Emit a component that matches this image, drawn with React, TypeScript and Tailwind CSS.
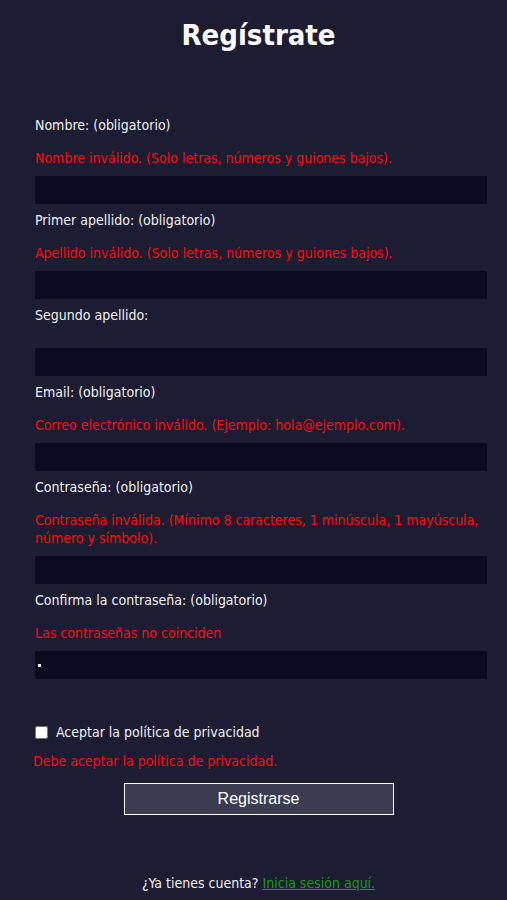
import React from "react";

const font = { fontFamily: '"DejaVu Sans Condensed", "DejaVu Sans", sans-serif' };

function Field({ label, error, dot }: { label: string; error?: string; dot?: boolean }) {
  return (
    <div className="flex flex-col">
      <label className="text-[14px] leading-[18px] text-[#f2f2f2]">{label}</label>
      <div className="mt-[15px] mb-[9px] w-[455px] text-[14px] leading-[18px] text-[#ff0a0a]">{error}</div>
      <div className="relative h-[28px] w-[452px] bg-[#0a0a23]">
        {dot && <span className="absolute left-[3px] top-[13px] h-[3px] w-[3px] bg-white" />}
      </div>
    </div>
  );
}

export default function App() {
  return (
    <div className="min-h-[900px] w-full bg-[#1c1c32] text-[#f2f2f2]" style={font}>
      <div className="flex flex-col pl-[35px] pr-[25px] pt-[17px]">
        <h1 className="text-center text-[29px] font-bold leading-[36px] text-white">Regístrate</h1>
        <div className="mt-[63px] flex flex-col gap-[7px]">
          <Field label="Nombre: (obligatorio)" error="Nombre inválido. (Solo letras, números y guiones bajos)." />
          <Field label="Primer apellido: (obligatorio)" error="Apellido inválido. (Solo letras, números y guiones bajos)." />
          <Field label="Segundo apellido:" />
          <Field label="Email: (obligatorio)" error="Correo electrónico inválido. (Ejemplo: hola@ejemplo.com)." />
          <Field
            label="Contraseña: (obligatorio)"
            error="Contraseña inválida. (Mínimo 8 caracteres, 1 minúscula, 1 mayúscula, número y símbolo)."
          />
          <Field label="Confirma la contraseña: (obligatorio)" error="Las contraseñas no coinciden" dot />
        </div>
        <div className="mt-[44px] flex items-center gap-[8px]">
          <input type="checkbox" className="h-[13px] w-[13px]" />
          <span className="text-[14px] leading-[18px]">Aceptar la política de privacidad</span>
        </div>
        <div className="-ml-[2px] mt-[11px] text-[14px] leading-[18px] text-[#ff0a0a]">
          Debe aceptar la política de privacidad.
        </div>
        <div className="mt-[13px] flex justify-center">
          <button
            className="h-[32px] w-[270px] border border-white bg-[#3c3c50] text-[16px] text-white"
            style={{ fontFamily: '"Liberation Sans", Arial, sans-serif' }}
          >
            Registrarse
          </button>
        </div>
        <div className="mt-[59px] text-center text-[14px] leading-[18px]">
          ¿Ya tienes cuenta?{" "}
          <a href="#" className="text-[#1a9a1a] underline">
            Inicia sesión aquí.
          </a>
        </div>
      </div>
    </div>
  );
}
